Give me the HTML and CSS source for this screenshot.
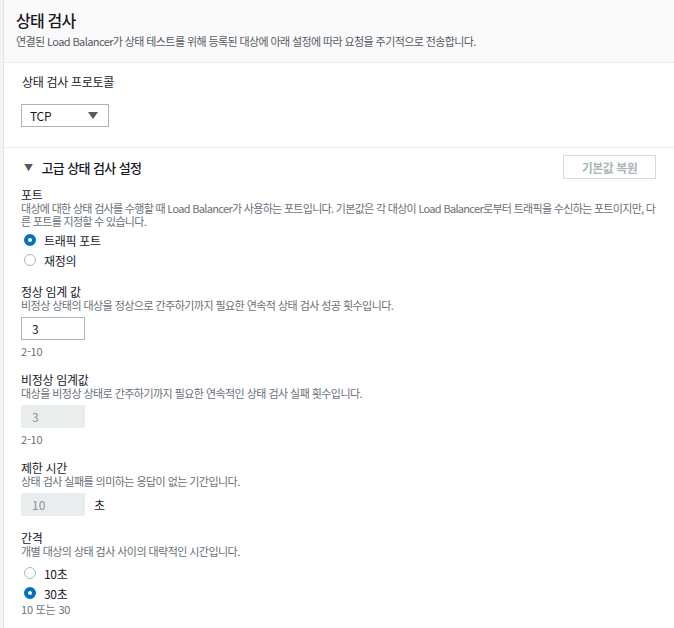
FILE: index.html
```html
<!DOCTYPE html>
<html lang="ko">
<head>
    <meta charset="UTF-8">
    <meta name="viewport" content="width=device-width, initial-scale=1.0">
    <title>상태 검사</title>
    <link rel="stylesheet" href="styles.css">
</head>
<body>

<div class="panel">
    <div class="panel-header">
        <h2 class="panel-title">상태 검사</h2>
        <p class="panel-desc">연결된 Load Balancer가 상태 테스트를 위해 등록된 대상에 아래 설정에 따라 요청을 주기적으로 전송합니다.</p>
    </div>

    <div class="section">
        <div class="label">상태 검사 프로토콜</div>
        <div class="select">
            <span>TCP</span>
            <span class="select-arrow"></span>
        </div>
    </div>

    <div class="section advanced">
        <div class="advanced-head">
            <div class="advanced-title"><span class="caret">▼</span>고급 상태 검사 설정</div>
            <button class="btn-reset" disabled>기본값 복원</button>
        </div>

        <!-- 포트 -->
        <div class="field first">
            <div class="label">포트</div>
            <div class="desc port-desc">대상에 대한 상태 검사를 수행할 때 Load Balancer가 사용하는 포트입니다. 기본값은 각 대상이 Load Balancer로부터 트래픽을 수신하는 포트이지만, 다른 포트를 지정할 수 있습니다.</div>
            <div class="radios">
                <label class="radio"><span class="dot checked"></span>트래픽 포트</label>
                <label class="radio"><span class="dot"></span>재정의</label>
            </div>
        </div>

        <!-- 정상 임계 값 -->
        <div class="field">
            <div class="label">정상 임계 값</div>
            <div class="desc">비정상 상태의 대상을 정상으로 간주하기까지 필요한 연속적 상태 검사 성공 횟수입니다.</div>
            <div class="input">3</div>
            <div class="hint">2-10</div>
        </div>

        <!-- 비정상 임계값 -->
        <div class="field">
            <div class="label">비정상 임계값</div>
            <div class="desc">대상을 비정상 상태로 간주하기까지 필요한 연속적인 상태 검사 실패 횟수입니다.</div>
            <div class="input disabled">3</div>
            <div class="hint">2-10</div>
        </div>

        <!-- 제한 시간 -->
        <div class="field">
            <div class="label">제한 시간</div>
            <div class="desc">상태 검사 실패를 의미하는 응답이 없는 기간입니다.</div>
            <div class="input-row">
                <div class="input disabled">10</div>
                <span class="unit">초</span>
            </div>
        </div>

        <!-- 간격 -->
        <div class="field">
            <div class="label">간격</div>
            <div class="desc">개별 대상의 상태 검사 사이의 대략적인 시간입니다.</div>
            <div class="radios interval">
                <label class="radio"><span class="dot"></span>10초</label>
                <label class="radio"><span class="dot checked"></span>30초</label>
            </div>
            <div class="hint tight">10 또는 30</div>
        </div>
    </div>
</div>

</body>
</html>
```

FILE: styles.css
```css
body {
    margin: 0;
    padding: 0 0 0 3px;
    background-color: #f4f4f4;
    font-family: "Noto Sans CJK KR", "Noto Sans", sans-serif;
    color: #16191f;
}

.panel {
    background-color: #fff;
    border-left: 1px solid #e3e6e6;
    min-height: 628px;
}

/* en-tête */
.panel-header {
    background-color: #fafafa;
    border-bottom: 1px solid #eaeded;
    padding: 10px 16px 14px 12px;
}

.panel-title {
    margin: 0;
    font-size: 16px;
    line-height: 20px;
    font-weight: 500;
    letter-spacing: -0.8px;
}

.panel-desc {
    margin: 4px 0 0;
    font-size: 11px;
    line-height: 14px;
    color: #545b64;
    letter-spacing: -0.6px;
}

.section {
    padding: 11px 18px 20px 17px;
    border-bottom: 1px solid #eaeded;
}

.advanced {
    border-bottom: none;
    padding-top: 7px;
}

.label {
    font-size: 12px;
    line-height: 14px;
    letter-spacing: -0.3px;
}

.section > .label {
    line-height: 16px;
    padding-left: 1px;
}

.select {
    margin-top: 14px;
    width: 88px;
    height: 23px;
    box-sizing: border-box;
    border: 1px solid #aab7b8;
    display: flex;
    align-items: center;
    justify-content: space-between;
    padding: 0 10px 0 8px;
    font-size: 12px;
    letter-spacing: -0.3px;
}

.select-arrow {
    width: 0;
    height: 0;
    border-left: 5px solid transparent;
    border-right: 5px solid transparent;
    border-top: 7px solid #545b64;
}

.advanced-head {
    display: flex;
    align-items: center;
    justify-content: space-between;
    height: 24px;
}

.advanced-title {
    font-size: 13px;
    font-weight: 500;
    letter-spacing: -0.6px;
    display: flex;
    align-items: center;
}

.caret {
    font-size: 9px;
    color: #545b64;
    margin: 0 9px 0 3px;
}

.btn-reset {
    width: 93px;
    height: 24px;
    border: 1px solid #d5dbdb;
    background-color: #fff;
    color: #aab7b8;
    font-family: inherit;
    font-size: 12px;
    font-weight: 700;
    letter-spacing: -0.5px;
    padding: 0;
}

.field {
    margin-top: 15px;
}

.field.first {
    margin-top: 9px;
}

.desc {
    font-size: 11px;
    line-height: 13px;
    color: #687078;
    letter-spacing: -0.55px;
}

.port-desc {
    margin-right: -6px;
    letter-spacing: -0.69px;
}

.radios {
    margin-top: 2px;
}

.radios.interval {
    margin-top: 5px;
}

.radio {
    display: flex;
    align-items: center;
    height: 20px;
    font-size: 12px;
    letter-spacing: -0.3px;
}

.dot {
    width: 10px;
    height: 10px;
    border: 1px solid #aab7b8;
    border-radius: 50%;
    margin: 0 8px 0 3px;
    background-color: #fff;
}

.dot.checked {
    width: 4px;
    height: 4px;
    border: 4px solid #0073bb;
}

.input {
    margin-top: 5px;
    width: 64px;
    height: 23px;
    box-sizing: border-box;
    border: 1px solid #aab7b8;
    padding: 0 10px;
    font-size: 12px;
    line-height: 21px;
}

.input.disabled {
    background-color: #eaeded;
    border-color: #eaeded;
    color: #879596;
}

.input-row {
    display: flex;
    align-items: center;
}

.unit {
    margin: 5px 0 0 9px;
    font-size: 12px;
}

.hint {
    margin-top: 5px;
    margin-bottom: 1px;
    font-size: 11px;
    line-height: 13px;
    color: #687078;
    letter-spacing: -0.2px;
}

.hint.tight {
    margin-top: 0;
}
```
